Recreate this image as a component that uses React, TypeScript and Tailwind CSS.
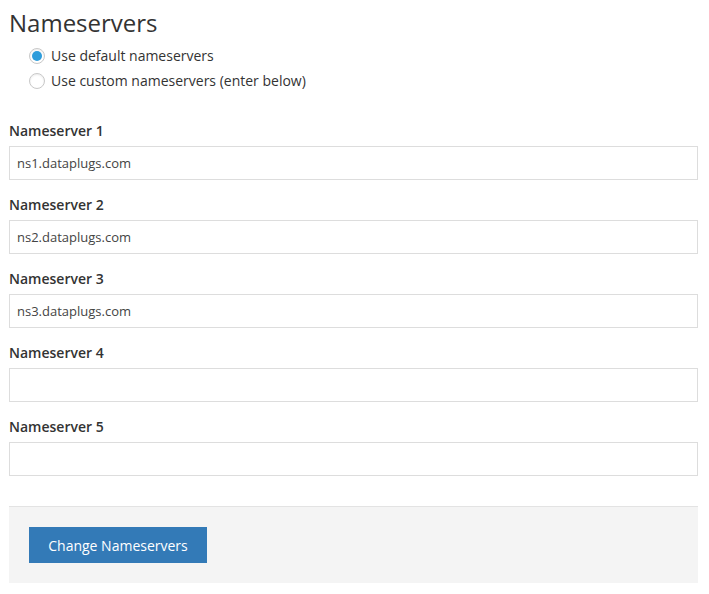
import React from "react";

function Radio({ checked, label }: { checked?: boolean; label: string }) {
  return (
    <label className="flex h-[25px] items-center">
      <span className="flex h-[16px] w-[16px] items-center justify-center rounded-full border border-[#c8c8c8] bg-white shadow-[inset_0_1px_2px_rgba(0,0,0,0.08)]">
        {checked && <span className="h-[10px] w-[10px] rounded-full bg-[#2d9cdb]" />}
      </span>
      <span className="ml-[6px] text-[14px] text-[#333]">{label}</span>
    </label>
  );
}

export default function App() {
  const values = ["ns1.dataplugs.com", "ns2.dataplugs.com", "ns3.dataplugs.com", "", ""];
  return (
    <div className="min-h-[594px] bg-white px-[9px] pr-[11px] font-['Open_Sans',sans-serif] text-[#333]">
      <h3 className="mt-[10px] text-[24px] leading-[26.4px] font-normal">Nameservers</h3>
      <div className="mt-[7px] pl-[20px]">
        <Radio checked label="Use default nameservers" />
        <Radio label="Use custom nameservers (enter below)" />
      </div>
      <div className="mt-[28px]">
        {values.map((v, i) => (
          <div key={i} className="mb-[15px]">
            <div className="mb-[5px] h-[20px] text-[14px] leading-[20px] font-semibold">Nameserver {i + 1}</div>
            <input
              readOnly
              value={v}
              className="block h-[34px] w-full border border-[#ddd] bg-white px-[7px] text-[13px] text-[#444] outline-none"
            />
          </div>
        ))}
      </div>
      <div className="mt-[30px] border-t border-[#e3e3e3] bg-[#f4f4f4] px-[20px] pt-[20px] pb-[20px]">
        <button className="h-[36px] w-[178px] bg-[#337ab7] text-[14px] text-white">Change Nameservers</button>
      </div>
    </div>
  );
}
